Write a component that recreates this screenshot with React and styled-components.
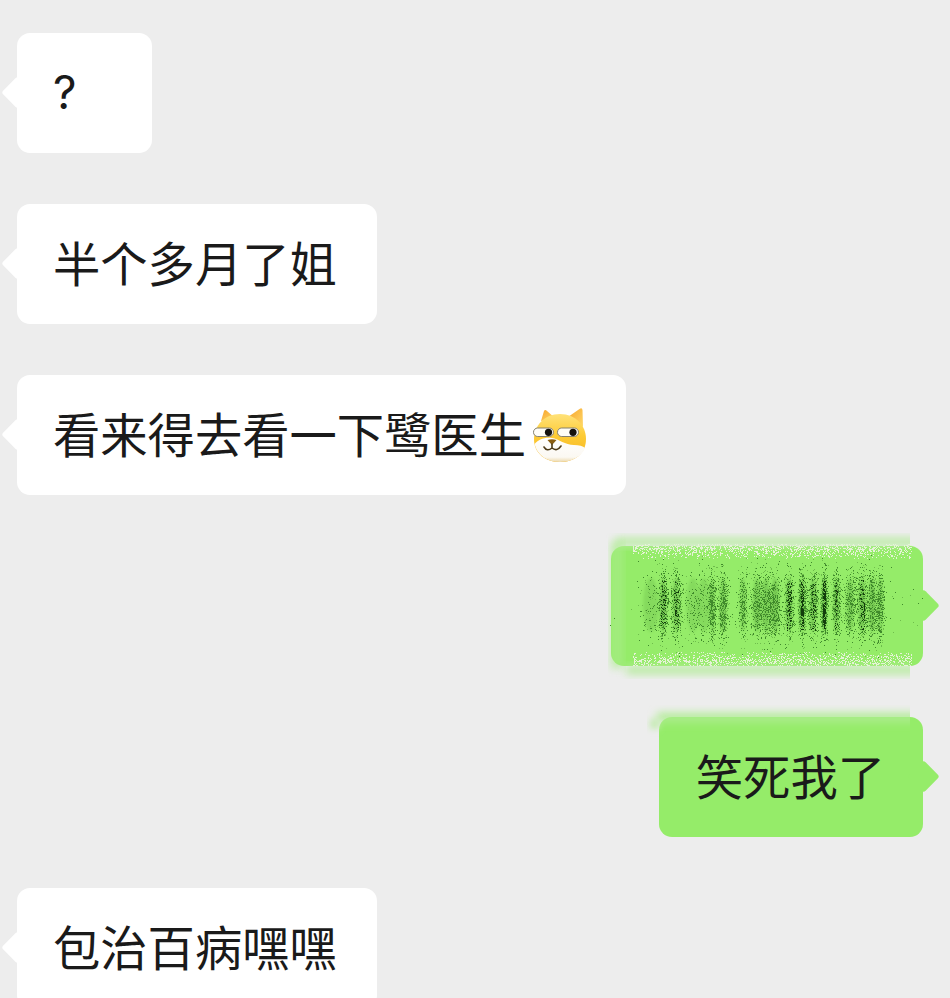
import React from "react";
import styled, { createGlobalStyle } from "styled-components";

const Global = createGlobalStyle`
  html, body { margin: 0; padding: 0; background: #ededed; overflow: hidden; }
  #root { height: 998px; overflow: hidden; }
`;

const Chat = styled.main`
  display: flex;
  flex-direction: column;
  gap: 51px;
  padding: 33px 27px 0 17px;
  width: 950px;
  box-sizing: border-box;
  font-family: "Noto Sans CJK SC", "Noto Sans", sans-serif;
`;

const Row = styled.div`
  display: flex;
  justify-content: ${(p) => (p.$mine ? "flex-end" : "flex-start")};
`;

const Bubble = styled.div`
  position: relative;
  display: flex;
  align-items: center;
  box-sizing: border-box;
  height: 120px;
  min-width: ${(p) => p.$minWidth || 0}px;
  padding: ${(p) => (p.$mine ? "0 38px 5px 37px" : "0 40px 5px 36px")};
  border-radius: 13px;
  background: ${(p) => (p.$mine ? "#95ec69" : "#ffffff")};
  color: #1a1a1a;
  font-size: 47.3px;
  line-height: 60px;
  white-space: nowrap;
  &::before {
    content: "";
    position: absolute;
    top: 50%;
    ${(p) => (p.$mine ? "right: -11.5px;" : "left: -11.5px;")}
    width: 23px;
    height: 23px;
    margin-top: -12px;
    border-radius: 3px;
    background: inherit;
    transform: rotate(45deg);
  }
`;

const Question = styled.span`
  font-family: "Inter", "Liberation Sans", sans-serif;
  font-size: 46px;
  margin-top: 3px;
`;

const Smudge = styled.svg`
  position: absolute;
  left: -11px;
  top: -16px;
  pointer-events: none;
`;

const Fade = styled.svg`
  position: absolute;
  left: -12px;
  top: -12px;
  pointer-events: none;
`;

const EmojiIcon = styled.svg`
  flex: none;
  margin-left: 6px;
  margin-right: -2px;
  margin-top: 5px;
`;

function rng(seed) {
  let s = seed;
  return () => {
    s = (s * 1664525 + 1013904223) % 4294967296;
    return s / 4294967296;
  };
}

function gauss(r) {
  return (r() + r() + r() + r() - 2) / 0.58;
}

function dots(list) {
  return list.map(([x, y]) => `M${x} ${y}h1v1h-1z`).join("");
}

const STREAKS = [
  [63, 2.5, 1], [76, 2.5, 1], [51, 7, 0.3], [93, 6, 0.3], [112, 2, 0.8], [123, 2.5, 0.9], [104, 6, 0.3], [143, 2.5, 0.6],
  [157, 3.5, 0.8], [166, 3.5, 0.8], [175, 3.5, 0.9], [189, 2.5, 1], [202, 2, 1.4], [213, 2.5, 1], [224, 1.6, 1.5],
  [236, 2, 1], [250, 3, 0.8], [262, 3, 1], [272, 3, 0.9], [280, 2, 0.8], [240, 50, 0.25], [150, 60, 0.25],
];

function makeSmudge() {
  const r = rng(42);
  const dark = [], mid = [], soft = [], white = [];
  STREAKS.forEach(([cx, w, k]) => {
    const n = Math.round(420 * k);
    const darkShare = k > 1.2 ? 0.5 : k >= 1 ? 0.25 : 0;
    for (let i = 0; i < n; i++) {
      const x = Math.round(cx + gauss(r) * w);
      const y = Math.round(75 + gauss(r) * 17);
      const t = r();
      const core = Math.abs(x - cx) < w && Math.abs(y - 75) < 26;
      if (core && t < darkShare) dark.push([x, y]);
      else if (t < 0.55) mid.push([x, y]);
      else soft.push([x, y]);
    }
  });
  for (let x = 33; x < 312; x++) {
    for (let y = 14; y < 136; y++) {
      const top = y < 29 ? 1 - Math.abs(y - 18) / 12 : 0;
      const bot = y > 121 ? 1 - Math.abs(y - 130) / 10 : 0;
      if (r() < Math.max(top, bot, 0) * 0.42) white.push([x, y]);
    }
  }
  return { dark: dots(dark), mid: dots(mid), soft: dots(soft), white: dots(white) };
}

const SMUDGE = makeSmudge();

function BlurOverlay() {
  return (
    <Smudge width="326" height="160" viewBox="0 0 326 160" aria-hidden="true">
      <defs>
        <filter id="softEdge" x="-20%" y="-60%" width="140%" height="220%">
          <feGaussianBlur stdDeviation="4" />
        </filter>
        <filter id="softStreak" x="-200%" y="-30%" width="500%" height="160%">
          <feGaussianBlur stdDeviation="1.5" />
        </filter>
        <clipPath id="smudgeClip">
          <rect x="0" y="0" width="310" height="160" />
        </clipPath>
      </defs>
      <g clipPath="url(#smudgeClip)">
        <rect x="16" y="8" width="310" height="8" fill="#b8eca0" filter="url(#softEdge)" />
        <rect x="26" y="136" width="310" height="8" fill="#b4eb9a" filter="url(#softEdge)" />
        <rect x="11" y="12" width="12" height="126" fill="#a9ec88" filter="url(#softEdge)" opacity="0.7" />
      </g>
      {STREAKS.filter((s) => s[1] < 10).map(([cx, w, k]) => (
        <ellipse
          key={cx}
          cx={cx}
          cy="75"
          rx={w * 1.1}
          ry="27"
          fill="#3f8f2a"
          opacity={Math.min(0.28 * k + 0.1, 0.6)}
          filter="url(#softStreak)"
        />
      ))}
      <path d={SMUDGE.white} fill="#e6f2d8" />
      <path d={SMUDGE.soft} fill="#6fbd4c" />
      <path d={SMUDGE.mid} fill="#3f8a2b" />
      <path d={SMUDGE.dark} fill="#123d0c" />
    </Smudge>
  );
}

function TopFade() {
  return (
    <Fade width="264" height="40" viewBox="0 0 264 40" aria-hidden="true">
      <defs>
        <filter id="softTop" x="-10%" y="-120%" width="120%" height="340%">
          <feGaussianBlur stdDeviation="4" />
        </filter>
        <filter id="softCorner" x="-100%" y="-100%" width="300%" height="300%">
          <feGaussianBlur stdDeviation="3" />
        </filter>
        <clipPath id="topClip">
          <rect x="0" y="0" width="263" height="40" />
        </clipPath>
      </defs>
      <g clipPath="url(#topClip)">
        <rect x="10" y="8" width="270" height="9" fill="#aeec90" filter="url(#softTop)" />
        <rect x="3" y="14" width="9" height="10" fill="#c5ebb2" filter="url(#softCorner)" />
      </g>
    </Fade>
  );
}

function DogeEmoji() {
  return (
    <EmojiIcon width="56" height="58" viewBox="0 0 56 58" aria-hidden="true">
      <defs>
        <linearGradient id="fur" x1="0" y1="0" x2="0" y2="1">
          <stop offset="0" stopColor="#ffe27a" />
          <stop offset="0.45" stopColor="#fdcb35" />
          <stop offset="1" stopColor="#f5b422" />
        </linearGradient>
        <linearGradient id="ear" x1="0" y1="0" x2="1" y2="1">
          <stop offset="0" stopColor="#f7a52c" />
          <stop offset="1" stopColor="#ffd96a" />
        </linearGradient>
        <linearGradient id="chin" x1="0" y1="0" x2="0" y2="1">
          <stop offset="0" stopColor="#ffffff" />
          <stop offset="0.8" stopColor="#fbf8f2" />
          <stop offset="1" stopColor="#ecd9ad" />
        </linearGradient>
      </defs>
      <path d="M9 15 L12 5 Q13 3 15 5 L23 12 Z" fill="url(#ear)" />
      <path d="M51 21 L50.5 4 Q50 1 47.5 3 L36 11 Z" fill="url(#ear)" />
      <path d="M28 8 C44 8 54 20 54 33 C54 48 42 56 28 56 C14 56 2 48 2 33 C2 20 12 8 28 8 Z" fill="url(#fur)" />
      <path d="M2.6 38 C6 34 12 31 20 32 C27 33 33 39 42 39 C47 39 51 40 53 42 C50 50 40 56 28 56 C15 56 5 49 2.6 38 Z" fill="url(#chin)" />
      <rect x="1.5" y="22" width="20" height="8.5" rx="4.2" fill="#fffdf6" stroke="#85806f" strokeWidth="1" />
      <rect x="25.5" y="22" width="21" height="8.5" rx="4.2" fill="#fffdf6" stroke="#85806f" strokeWidth="1" />
      <circle cx="16.5" cy="26.3" r="3.6" fill="#14110d" />
      <circle cx="41" cy="26.3" r="3.6" fill="#14110d" />
      <path d="M15.5 34 Q20 32.5 24.5 34 L20.5 38.5 Q20 39 19.5 38.5 Z" fill="#8a5e12" />
      <path d="M20 38 V42 M12 41 Q15 46 20 42 Q25 46 29 40" fill="none" stroke="#4e3b18" strokeWidth="1.6" strokeLinecap="round" />
    </EmojiIcon>
  );
}

export default function App() {
  return (
    <>
      <Global />
      <Chat>
        <Row>
          <Bubble $minWidth={135}>
            <Question>?</Question>
          </Bubble>
        </Row>
        <Row>
          <Bubble>半个多月了姐</Bubble>
        </Row>
        <Row>
          <Bubble>
            看来得去看一下鹭医生
            <DogeEmoji />
          </Bubble>
        </Row>
        <Row $mine>
          <Bubble $mine $minWidth={312}>
            <BlurOverlay />
          </Bubble>
        </Row>
        <Row $mine>
          <Bubble $mine>
            <TopFade />
            笑死我了
          </Bubble>
        </Row>
        <Row>
          <Bubble>包治百病嘿嘿</Bubble>
        </Row>
      </Chat>
    </>
  );
}
